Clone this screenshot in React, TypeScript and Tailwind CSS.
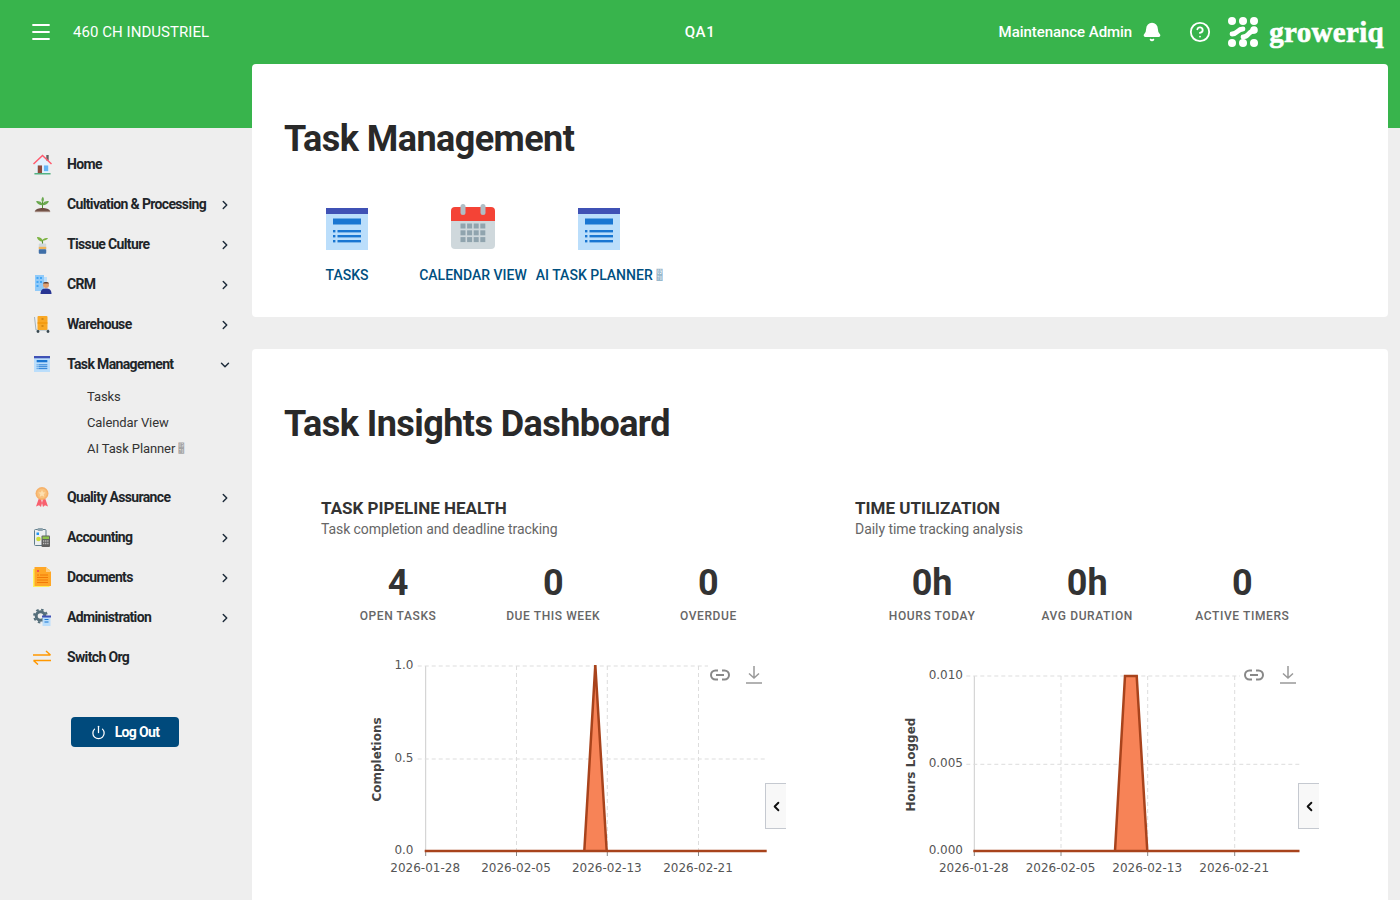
import { ChevronRight, ChevronDown, ChevronLeft, Menu, Bell, CircleHelp, Power } from "lucide-react";

const roboto = "font-['Roboto',sans-serif]";

function Tofu() {
  return <span className="inline-block w-[6px] origin-left scale-x-50 opacity-40 overflow-visible align-baseline">{"\u0378"}</span>;
}

function TasksIcon({ className }: { className: string }) {
  return (
    <svg viewBox="0 0 42 42" className={className}>
      <rect width="42" height="42" fill="#bbdefb" />
      <rect width="42" height="6" fill="#3f51b5" />
      <rect x="7" y="10.500" width="28" height="6" fill="#1976d2" />
      <rect x="7" y="22" width="2.400" height="2.400" fill="#1976d2" />
      <rect x="11.500" y="22" width="23.500" height="2.400" fill="#1976d2" />
      <rect x="7" y="27" width="2.400" height="2.400" fill="#1976d2" />
      <rect x="11.500" y="27" width="23.500" height="2.400" fill="#1976d2" />
      <rect x="7" y="32" width="2.400" height="2.400" fill="#1976d2" />
      <rect x="11.500" y="32" width="23.500" height="2.400" fill="#1976d2" />
    </svg>
  );
}

function CalendarIcon() {
  const cells = [];
  for (let r = 0; r < 3; r++) {
    for (let c = 0; c < 4; c++) {
      cells.push(<rect key={`${r}-${c}`} x={9.500 + c * 6.600} y={19.500 + r * 6.800} width="5" height="5" fill="#90a4ae" />);
    }
  }
  return (
    <svg viewBox="0 0 44 46" className="w-[44px] h-[46px]">
      <path d="M0 14h44v27a4 4 0 0 1-4 4H4a4 4 0 0 1-4-4z" fill="#cfd8dc" />
      <path d="M4 3h36a4 4 0 0 1 4 4v10H0V7a4 4 0 0 1 4-4z" fill="#f44336" />
      <rect x="9.500" y="0" width="5" height="11" rx="2.500" fill="#b0bec5" />
      <rect x="29.500" y="0" width="5" height="11" rx="2.500" fill="#b0bec5" />
      {cells}
    </svg>
  );
}

function HomeIcon() {
  return (
    <svg viewBox="0 0 20 22" className="w-[19px] h-[21px]">
      <rect x="14" y="1" width="2.500" height="6" fill="#616161" />
      <path d="M3 10 10 3l7 7v10H3z" fill="#e3f2fd" />
      <path d="M0.500 10.500 10 1.500l9.500 9" fill="none" stroke="#ff5a6e" strokeWidth="1.600" />
      <rect x="5" y="12" width="4.500" height="8" fill="#8d4a3a" />
      <rect x="11.500" y="12" width="4.500" height="6" fill="#64b5f6" />
      <rect x="1.500" y="20" width="17" height="1.500" fill="#4caf7d" />
    </svg>
  );
}

function SproutIcon() {
  return (
    <svg viewBox="0 0 20 20" className="w-[17px] h-[17px]">
      <path d="M10 15V7" stroke="#558b2f" strokeWidth="1.200" />
      <path d="M10 11C6 11 3 9 2.500 6c4 0 7.500 1 7.500 5zM10 11c4 0 7-2 7.500-5-4 0-7.500 1-7.500 5zM10 8C8 5.500 8.500 3 10.500 1c1.800 2.500 1.500 5-.5 7z" fill="#6aa84f" />
      <path d="M1 18c1-3 5-4 9-4s8 1 9 4z" fill="#6d4c41" />
      <rect x="1" y="17.500" width="18" height="1.500" fill="#a1887f" />
    </svg>
  );
}

function TissueIcon() {
  return (
    <svg viewBox="0 0 14 20" className="w-[13px] h-[19px]">
      <path d="M7 10V5" stroke="#558b2f" strokeWidth="1.200" />
      <path d="M7 7C4 7 1.500 5 1 2c3 0 6 1 6 5zM7 6c2.500 0 5-1 6-3-3 0-6 .5-6 3z" fill="#7cb342" />
      <rect x="3" y="9" width="8" height="11" rx="1" fill="#cfd8dc" />
      <rect x="3" y="12.500" width="8" height="2.500" fill="#f0b45a" />
      <rect x="3" y="15" width="8" height="5" rx="1" fill="#3f6fa8" />
    </svg>
  );
}

function CrmIcon() {
  return (
    <svg viewBox="0 0 17 19" className="w-[17px] h-[19px] ml-[2px]">
      <rect x="0" y="0" width="9" height="16" fill="#90caf9" />
      <rect x="9" y="2" width="3" height="8" fill="#bbdefb" />
      <rect x="1.500" y="2" width="2" height="2" fill="#42a5f5" />
      <rect x="5" y="2" width="2" height="2" fill="#42a5f5" />
      <rect x="1.500" y="6" width="2" height="2" fill="#42a5f5" />
      <rect x="5" y="6" width="2" height="2" fill="#42a5f5" />
      <rect x="1.500" y="10" width="2" height="2" fill="#42a5f5" />
      <circle cx="11" cy="10" r="3" fill="#e0a070" />
      <path d="M8 8.500c0-2 6-2 6 0z" fill="#5d4037" />
      <path d="M5.500 19c0-4.500 2.500-5.500 5.500-5.500s5.500 1 5.500 5.500z" fill="#283593" />
    </svg>
  );
}

function WarehouseIcon() {
  return (
    <svg viewBox="0 0 16 17" className="w-4 h-[17px]">
      <path d="M0.500 1l1.500 13h13" fill="none" stroke="#90a4ae" strokeWidth="0.800" />
      <rect x="3.500" y="0" width="10" height="14" rx="1" fill="#f9a825" />
      <rect x="3.500" y="6.500" width="10" height="1" fill="#ef8f00" />
      <rect x="7.500" y="2.500" width="2" height="1" fill="#b26a00" />
      <rect x="7.500" y="9.500" width="2" height="1" fill="#b26a00" />
      <circle cx="4" cy="15.500" r="1.400" fill="#37474f" />
      <circle cx="14" cy="15.500" r="1.400" fill="#37474f" />
    </svg>
  );
}

function QualityIcon() {
  return (
    <svg viewBox="0 0 14 20" className="w-[14px] h-5">
      <path d="M4 11 1 19.500l3-1.200L6 20l2-8zM10 11l3 8.500-3-1.200L8 20l-2-8z" fill="#f8606e" />
      <circle cx="7" cy="6.500" r="6.500" fill="#f6b26b" />
      <circle cx="7" cy="6.500" r="4.800" fill="#f9c27e" />
      <path d="m7 3 1.100 2.300 2.400.3-1.800 1.700.5 2.400L7 8.500 4.800 9.700l.5-2.400-1.800-1.700 2.400-.3z" fill="#fde0b0" />
    </svg>
  );
}

function AccountingIcon() {
  return (
    <svg viewBox="0 0 16 19" className="w-4 h-[19px]">
      <rect x="0.500" y="1.500" width="11.500" height="16" rx="1" fill="#eceff1" stroke="#607d8b" />
      <rect x="3.500" y="0" width="5.500" height="3" rx="1" fill="#90a4ae" />
      <rect x="2.500" y="4.500" width="2.500" height="2.500" fill="#2196f3" />
      <circle cx="4.500" cy="11" r="2.300" fill="#cddc39" />
      <rect x="7.500" y="7.500" width="8.500" height="11.500" rx="1" fill="#616161" />
      <rect x="8.500" y="8.500" width="6.500" height="2.500" fill="#8bc34a" />
      <path d="M9 13h5.500M9 15.500h5.500" stroke="#bdbdbd" strokeWidth="1.300" strokeDasharray="1.300 .8" />
    </svg>
  );
}

function DocumentsIcon() {
  return (
    <svg viewBox="0 0 18 20" className="w-[18px] h-5">
      <rect x="0" y="2" width="16.500" height="18" fill="#ffee58" />
      <path d="M1.500 0H13l5 5v14H1.500z" fill="#ffa726" />
      <path d="M13 0l5 5h-5z" fill="#ffcc80" />
      <rect x="4" y="3" width="2" height="2" fill="#ef5350" />
      <path d="M7 8h8M4 8h2M4 10.500h11M4 13h11M4 15.500h11" stroke="#ef6c00" strokeWidth="0.800" />
    </svg>
  );
}

function AdminIcon() {
  return (
    <svg viewBox="0 0 18 18" className="w-[18px] h-[18px]">
      <circle cx="7.500" cy="8" r="4.300" fill="none" stroke="#546e7a" strokeWidth="3" />
      <circle cx="7.500" cy="8" r="6.400" fill="none" stroke="#546e7a" strokeWidth="2" strokeDasharray="2.500 2.500" />
      <rect x="9.500" y="8.500" width="8" height="9.500" fill="#bbdefb" />
      <rect x="9" y="7.500" width="9" height="2" fill="#3f51b5" />
      <path d="M11.500 11.500h4M11.500 14h4" stroke="#1976d2" strokeWidth="1" />
    </svg>
  );
}

function SwitchIcon() {
  return (
    <svg viewBox="0 0 20 15" className="w-5 h-[15px]" fill="none" stroke="#ff9800" strokeWidth="1.500">
      <path d="M1 5h17.500M14 1l4.500 4" />
      <path d="M19 10.500H1.500M6 14.500l-4.500-4" />
    </svg>
  );
}

function LogoMark() {
  return (
    <svg viewBox="0 0 30 30" className="w-[30px] h-[30px]" fill="#fff">
      <circle cx="4" cy="4" r="4" />
      <circle cx="15" cy="4" r="4" />
      <circle cx="26" cy="4" r="4" />
      <circle cx="26" cy="13" r="3.800" />
      <circle cx="4" cy="26" r="4" />
      <circle cx="15" cy="26" r="4" />
      <circle cx="26" cy="26" r="4" />
      <path d="M4 17C10 17 9 12 15 12M15 20C21 20 20 14 26 14" fill="none" stroke="#fff" strokeWidth="4.800" strokeLinecap="round" />
    </svg>
  );
}

function NavRow({ icon, label, open, arrow = true }: { icon: React.ReactNode; label: string; open?: boolean; arrow?: boolean }) {
  return (
    <div className="flex items-center h-10 pl-8 pr-[19px]">
      <div className="w-5 flex justify-center shrink-0">{icon}</div>
      <span className="ml-[15px] flex-1 text-sm font-bold tracking-[-0.65px] text-[#212529] whitespace-nowrap">{label}</span>
      {arrow && (open ? <ChevronDown className="w-[14px] h-[14px] mt-[2px] mr-[1px] text-[#1d2b3a]" strokeWidth={2.500} /> : <ChevronRight className="w-[14px] h-[14px] mt-[2px] mr-[1px] text-[#1d2b3a]" strokeWidth={2.500} />)}
    </div>
  );
}

function Tile({ icon, label }: { icon: React.ReactNode; label: React.ReactNode }) {
  return (
    <div className="flex flex-col items-center">
      <div className="h-[46px] flex items-end">{icon}</div>
      <div className="mt-[15px] text-sm font-medium text-[#004f7f] whitespace-nowrap leading-5">{label}</div>
    </div>
  );
}

function Stat({ value, label }: { value: string; label: string }) {
  return (
    <div className="flex flex-col items-center">
      <div className="text-[36px] leading-[42px] font-bold text-[#333]">{value}</div>
      <div className="mt-[3px] text-xs leading-[18px] font-medium tracking-[0.6px] text-[#666]">{label}</div>
    </div>
  );
}

type ChartProps = {
  yTitle: string;
  axisX: number;
  topY: number;
  midY: number;
  yLabels: string[];
  xTicks: number[];
  endX: number;
  topEnd: number;
  shape: string;
  labelX: number;
  titleX: number;
  tabClass: string;
};

function Chart({ yTitle, axisX, topY, midY, yLabels, xTicks, endX, topEnd, shape, labelX, titleX, tabClass }: ChartProps) {
  const base = 201;
  const dates = ["2026-01-28", "2026-02-05", "2026-02-13", "2026-02-21"];
  const midTitle = (topY + base) / 2 + 1;
  return (
    <div className="relative mt-[25px] h-[230px]">
      <svg width="465" height="230" className="block font-['DejaVu_Sans',sans-serif]">
        {xTicks.map((x, i) => (
          <line key={x} x1={x} x2={x} y1={topY} y2={base} stroke={i === 0 ? "#cccccc" : "#dddddd"} strokeDasharray={i === 0 ? undefined : "4 3"} />
        ))}
        {xTicks.map((x) => (
          <line key={x} x1={x} x2={x} y1={base} y2={base + 5} stroke="#888" />
        ))}
        <line x1={axisX - 8} x2={topEnd} y1={topY} y2={topY} stroke="#dddddd" strokeDasharray="4 3" />
        <line x1={axisX - 8} x2={endX} y1={midY} y2={midY} stroke="#dddddd" strokeDasharray="4 3" />
        <path d={`${shape} Z`} fill="#f78357" />
        <path d={shape} fill="none" stroke="#a8431c" strokeWidth="2.500" />
        <line x1={axisX - 1} x2={endX} y1={base} y2={base} stroke="#a8431c" strokeWidth="2.500" />
        <g fontSize="12" fill="#555">
          <text x={labelX} y={topY + 3} textAnchor="end">{yLabels[0]}</text>
          <text x={labelX} y={midY + 3} textAnchor="end">{yLabels[1]}</text>
          <text x={labelX} y={base + 3} textAnchor="end">{yLabels[2]}</text>
          {xTicks.map((x, i) => (
            <text key={x} x={x - 0.5} y={222} textAnchor="middle">{dates[i]}</text>
          ))}
        </g>
        <text x={titleX} y={midTitle} fontSize="12" fontWeight="700" fill="#444" textAnchor="middle" transform={`rotate(-90 ${titleX} ${midTitle})`}>{yTitle}</text>
      </svg>
      <svg viewBox="0 0 20 12" className="absolute right-[56px] top-[19px] w-[20px] h-[12px]" fill="none" stroke="#888" strokeWidth="2">
        <path d="M8 1.500H5.500a4.500 4.500 0 0 0 0 9H8M12 1.500h2.500a4.500 4.500 0 0 1 0 9H12M6 6h8" />
      </svg>
      <svg viewBox="0 0 18 18" className="absolute right-[23px] top-[16px] w-[18px] h-[18px]" fill="none" stroke="#999" strokeWidth="1.500">
        <path d="M9 0v12M4 7.500 9 12l5-4.500M1 17h16" />
      </svg>
      <div className={`absolute top-[133px] w-[21px] h-[46px] bg-[#f8f8f8] border border-r-0 border-[#c5c9d0] flex items-center justify-center ${tabClass}`}>
        <ChevronLeft className="w-[15px] h-[15px] text-[#111]" strokeWidth={3} />
      </div>
    </div>
  );
}

export default function App() {
  return (
    <div className={`min-h-screen h-[900px] overflow-hidden ${roboto} bg-[linear-gradient(#38b44c_128px,#eeeeee_128px)]`}>
      <header className="h-16 flex items-center relative text-white">
        <Menu className="ml-[29px] w-6 h-6" strokeWidth={1.800} />
        <div className="ml-[20px] text-[15px] tracking-[0.05px]">460 CH INDUSTRIEL</div>
        <div className="absolute left-0 right-0 text-center text-[15px] font-medium tracking-[0.6px] pointer-events-none">QA1</div>
        <div className="ml-auto flex items-center pr-[16px]">
          <span className="text-[15px] font-medium tracking-[-0.05px]">Maintenance Admin</span>
          <Bell className="ml-[10px] w-[20px] h-[20px] fill-white" />
          <CircleHelp className="ml-[27px] w-[22px] h-[22px]" strokeWidth={2} />
          <div className="ml-[17px]"><LogoMark /></div>
          <span className="ml-[11px] font-['Liberation_Serif',serif] font-bold text-[29px] leading-8 tracking-[0.33px] [-webkit-text-stroke:0.6px_white]">groweriq</span>
        </div>
      </header>
      <div className="flex">
        <aside className="w-[252px] shrink-0 pt-[80px]">
          <NavRow icon={<HomeIcon />} label="Home" arrow={false} />
          <NavRow icon={<SproutIcon />} label="Cultivation & Processing" />
          <NavRow icon={<TissueIcon />} label="Tissue Culture" />
          <NavRow icon={<CrmIcon />} label="CRM" />
          <NavRow icon={<WarehouseIcon />} label="Warehouse" />
          <NavRow icon={<TasksIcon className="w-4 h-4" />} label="Task Management" open />
          <div className="pl-[87px] mb-[15px] text-[13px] tracking-[-0.1px] text-[#333]">
            <div className="h-[26px] leading-[26px]">Tasks</div>
            <div className="h-[26px] leading-[26px]">Calendar View</div>
            <div className="h-[26px] leading-[26px]">AI Task Planner <Tofu /></div>
          </div>
          <NavRow icon={<QualityIcon />} label="Quality Assurance" />
          <NavRow icon={<AccountingIcon />} label="Accounting" />
          <NavRow icon={<DocumentsIcon />} label="Documents" />
          <NavRow icon={<AdminIcon />} label="Administration" />
          <NavRow icon={<SwitchIcon />} label="Switch Org" arrow={false} />
          <button className="mt-[40px] ml-[71px] w-[108px] h-[30px] rounded bg-[#004a7c] text-white text-sm font-bold tracking-[-0.65px] flex items-center justify-center gap-[9px]">
            <Power className="w-[15px] h-[15px]" strokeWidth={2} />
            Log Out
          </button>
        </aside>
        <main className="flex-1 mr-3 min-w-0">
          <section className="bg-white rounded h-[253px] px-8 pt-[51px]">
            <h1 className="text-[36px] leading-[48px] font-bold tracking-[-0.57px] text-[#292929]">Task Management</h1>
            <div className="mt-[41px] grid grid-cols-[repeat(3,126px)]">
              <Tile icon={<TasksIcon className="w-[42px] h-[42px]" />} label="TASKS" />
              <Tile icon={<CalendarIcon />} label="CALENDAR VIEW" />
              <Tile icon={<TasksIcon className="w-[42px] h-[42px]" />} label={<>AI TASK PLANNER <Tofu /></>} />
            </div>
          </section>
          <section className="mt-8 bg-white rounded px-8 pt-[51px] h-[600px]">
            <h1 className="text-[36px] leading-[48px] font-bold tracking-[-0.57px] text-[#292929]">Task Insights Dashboard</h1>
            <div className="mt-[49px] ml-[37px] grid grid-cols-[465px_465px] gap-x-[69px]">
              <div>
                <div className="text-[17px] leading-[22px] font-bold text-[#333]">TASK PIPELINE HEALTH</div>
                <div className="text-sm leading-5 tracking-[-0.08px] text-[#666]">Task completion and deadline tracking</div>
                <div className="mt-[23px] -ml-[0.5px] grid grid-cols-3">
                  <Stat value="4" label="OPEN TASKS" />
                  <Stat value="0" label="DUE THIS WEEK" />
                  <Stat value="0" label="OVERDUE" />
                </div>
                <Chart
                  yTitle="Completions"
                  axisX={104.700}
                  topY={16}
                  midY={109}
                  yLabels={["1.0", "0.5", "0.0"]}
                  xTicks={[104.700, 195.500, 286.300, 377.500]}
                  endX={445.700}
                  topEnd={387}
                  shape="M263.300 201 L274.300 15 L285.700 201"
                  labelX={92.500}
                  titleX={60}
                  tabClass="right-0"
                />
              </div>
              <div>
                <div className="text-[17px] leading-[22px] font-bold text-[#333]">TIME UTILIZATION</div>
                <div className="text-sm leading-5 tracking-[-0.05px] text-[#666]">Daily time tracking analysis</div>
                <div className="mt-[23px] -ml-[0.5px] grid grid-cols-3">
                  <Stat value="0h" label="HOURS TODAY" />
                  <Stat value="0h" label="AVG DURATION" />
                  <Stat value="0" label="ACTIVE TIMERS" />
                </div>
                <Chart
                  yTitle="Hours Logged"
                  axisX={119.300}
                  topY={26}
                  midY={114.300}
                  yLabels={["0.010", "0.005", "0.000"]}
                  xTicks={[119.300, 206, 292.700, 379.700]}
                  endX={444.500}
                  topEnd={385}
                  shape="M260 201 L270 26 L281.700 26 L292.300 201"
                  labelX={108}
                  titleX={60}
                  tabClass="right-[1px]"
                />
              </div>
            </div>
          </section>
        </main>
      </div>
    </div>
  );
}
